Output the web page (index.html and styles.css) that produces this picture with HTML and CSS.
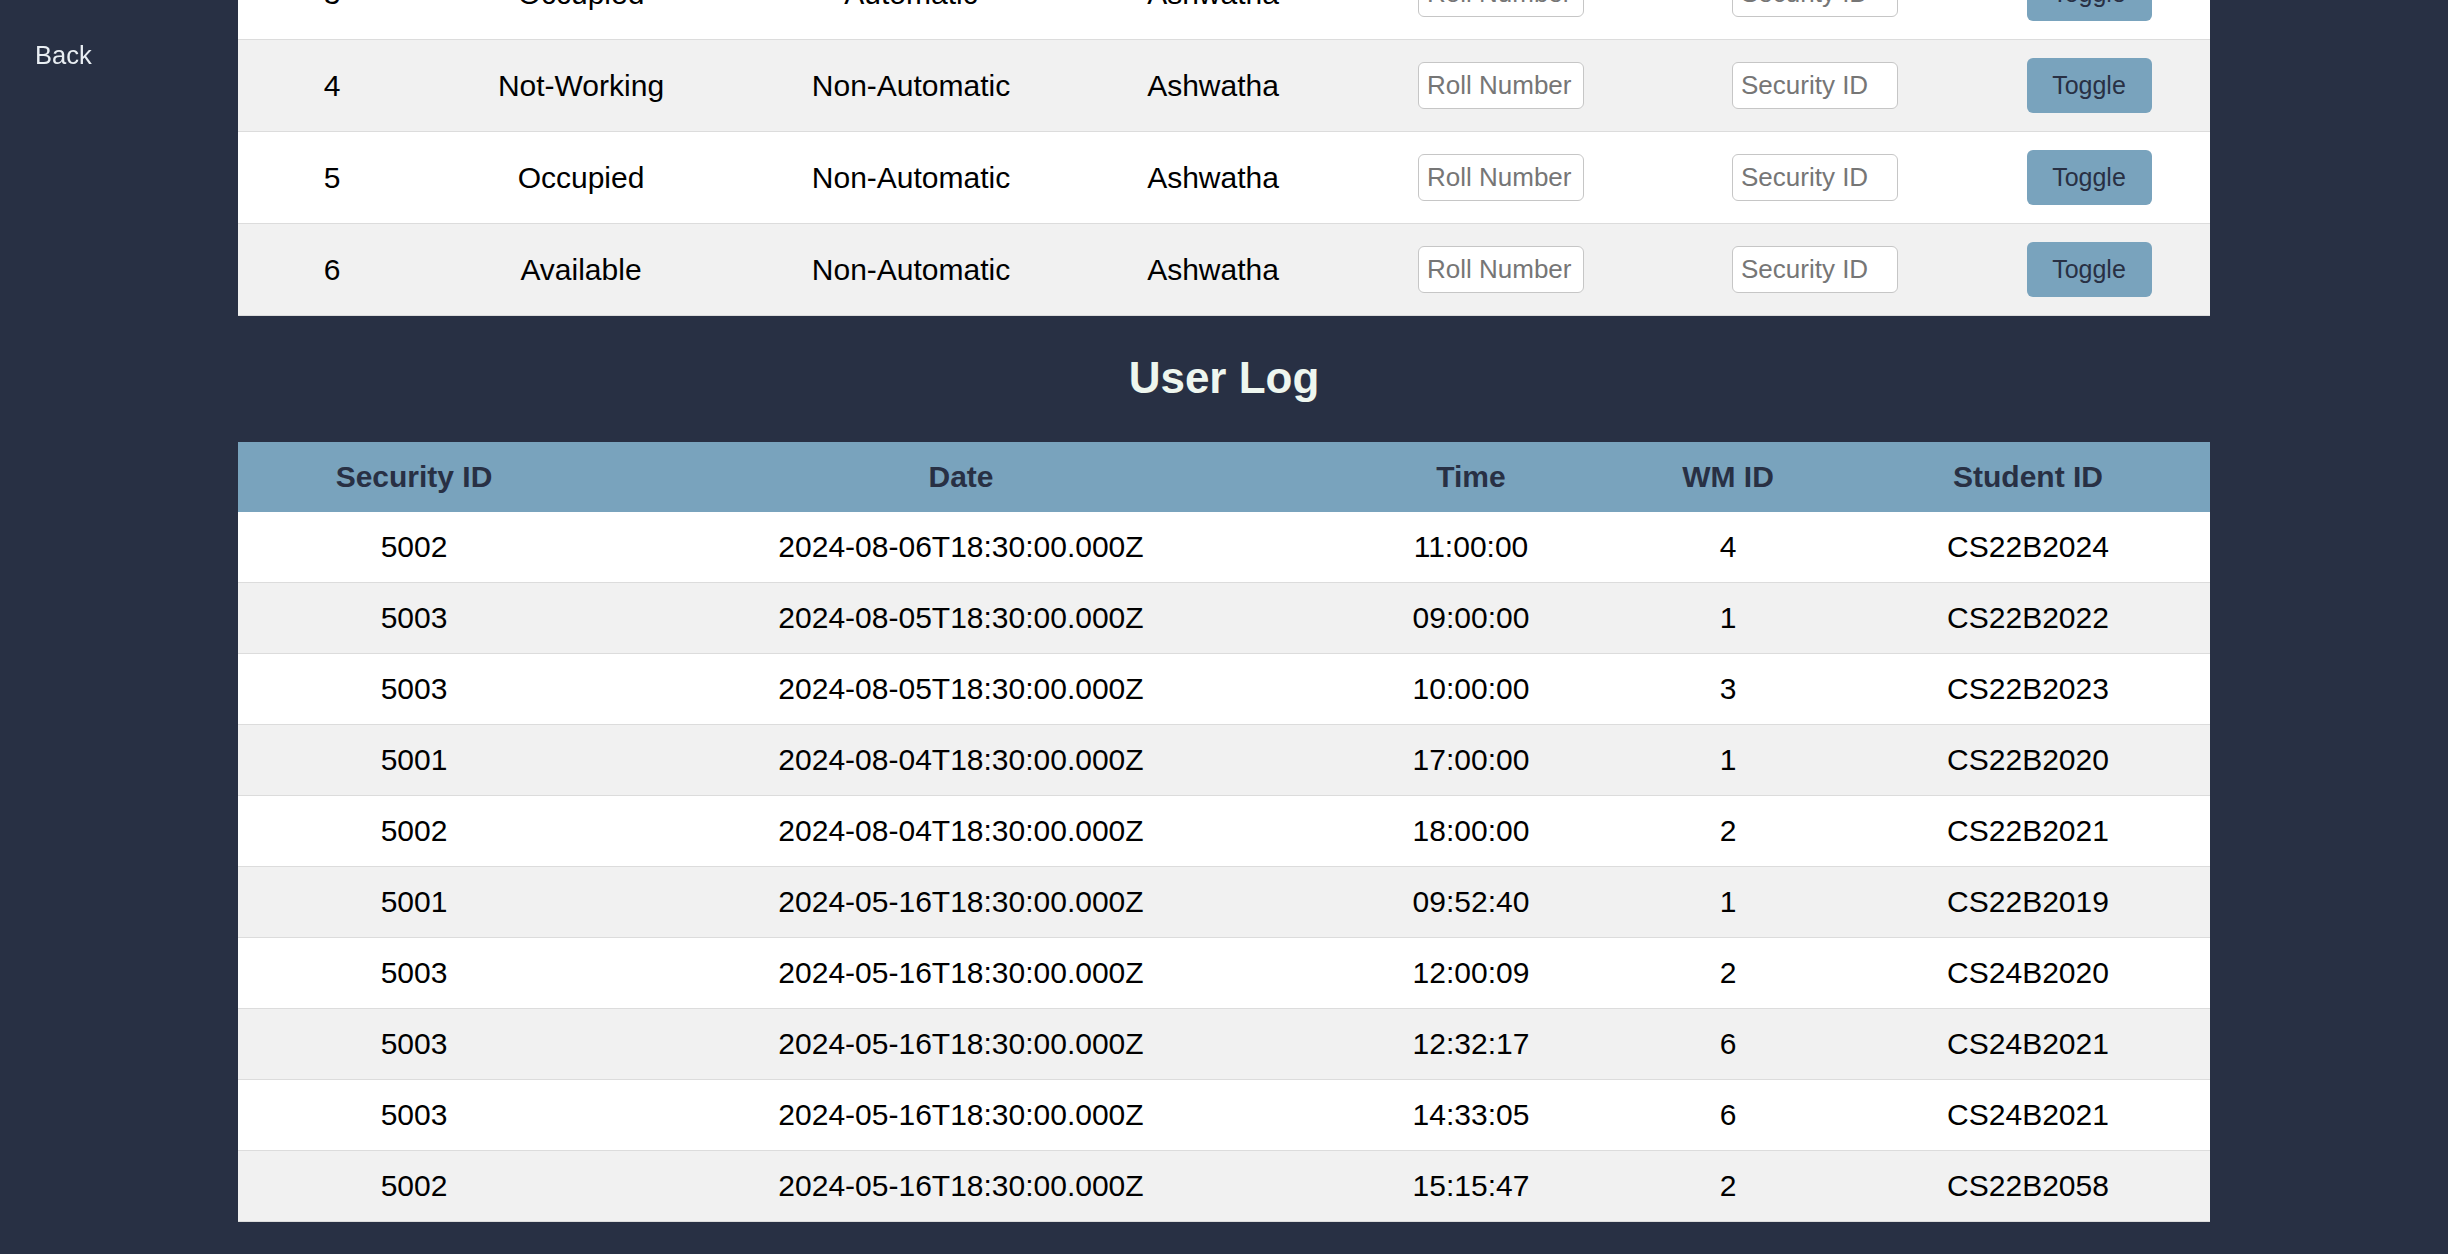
FILE: index.html
```html
<!DOCTYPE html>
<html lang="en">
<head>
<meta charset="utf-8">
<title>Washing Machines - User Log</title>
<link rel="stylesheet" href="styles.css">
</head>
<body>
<button class="back" type="button">Back</button>
<main class="page">
  <table class="machines">
    <colgroup>
      <col class="m-c1"><col class="m-c2"><col class="m-c3"><col class="m-c4"><col class="m-c5"><col class="m-c6"><col class="m-c7">
    </colgroup>
    <tbody>
      <tr>
        <td>3</td><td>Occupied</td><td>Automatic</td><td>Ashwatha</td>
        <td><input class="field" type="text" placeholder="Roll Number"></td>
        <td><input class="field" type="text" placeholder="Security ID"></td>
        <td><button class="toggle" type="button">Toggle</button></td>
      </tr>
      <tr>
        <td>4</td><td>Not-Working</td><td>Non-Automatic</td><td>Ashwatha</td>
        <td><input class="field" type="text" placeholder="Roll Number"></td>
        <td><input class="field" type="text" placeholder="Security ID"></td>
        <td><button class="toggle" type="button">Toggle</button></td>
      </tr>
      <tr>
        <td>5</td><td>Occupied</td><td>Non-Automatic</td><td>Ashwatha</td>
        <td><input class="field" type="text" placeholder="Roll Number"></td>
        <td><input class="field" type="text" placeholder="Security ID"></td>
        <td><button class="toggle" type="button">Toggle</button></td>
      </tr>
      <tr>
        <td>6</td><td>Available</td><td>Non-Automatic</td><td>Ashwatha</td>
        <td><input class="field" type="text" placeholder="Roll Number"></td>
        <td><input class="field" type="text" placeholder="Security ID"></td>
        <td><button class="toggle" type="button">Toggle</button></td>
      </tr>
    </tbody>
  </table>

  <h2 class="section-title">User Log</h2>

  <table class="log">
    <colgroup>
      <col class="l-c1"><col class="l-c2"><col class="l-c3"><col class="l-c4"><col class="l-c5">
    </colgroup>
    <thead>
      <tr><th>Security ID</th><th>Date</th><th>Time</th><th>WM ID</th><th>Student ID</th></tr>
    </thead>
    <tbody>
      <tr><td>5002</td><td>2024-08-06T18:30:00.000Z</td><td>11:00:00</td><td>4</td><td>CS22B2024</td></tr>
      <tr><td>5003</td><td>2024-08-05T18:30:00.000Z</td><td>09:00:00</td><td>1</td><td>CS22B2022</td></tr>
      <tr><td>5003</td><td>2024-08-05T18:30:00.000Z</td><td>10:00:00</td><td>3</td><td>CS22B2023</td></tr>
      <tr><td>5001</td><td>2024-08-04T18:30:00.000Z</td><td>17:00:00</td><td>1</td><td>CS22B2020</td></tr>
      <tr><td>5002</td><td>2024-08-04T18:30:00.000Z</td><td>18:00:00</td><td>2</td><td>CS22B2021</td></tr>
      <tr><td>5001</td><td>2024-05-16T18:30:00.000Z</td><td>09:52:40</td><td>1</td><td>CS22B2019</td></tr>
      <tr><td>5003</td><td>2024-05-16T18:30:00.000Z</td><td>12:00:09</td><td>2</td><td>CS24B2020</td></tr>
      <tr><td>5003</td><td>2024-05-16T18:30:00.000Z</td><td>12:32:17</td><td>6</td><td>CS24B2021</td></tr>
      <tr><td>5003</td><td>2024-05-16T18:30:00.000Z</td><td>14:33:05</td><td>6</td><td>CS24B2021</td></tr>
      <tr><td>5002</td><td>2024-05-16T18:30:00.000Z</td><td>15:15:47</td><td>2</td><td>CS22B2058</td></tr>
    </tbody>
  </table>
</main>
</body>
</html>
```
FILE: styles.css
```css
html, body {
  margin: 0;
  padding: 0;
}

body {
  background: #283044;
  font-family: "Liberation Sans", Arial, sans-serif;
  color: #000;
  overflow: hidden;
}

.back {
  position: fixed;
  top: 41px;
  left: 35px;
  margin: 0;
  padding: 0;
  border: none;
  background: transparent;
  color: #e9eef3;
  font-family: "Liberation Sans", Arial, sans-serif;
  font-size: 25.5px;
  line-height: normal;
  cursor: pointer;
}

.page {
  display: flex;
  flex-direction: column;
  align-items: center;
  margin-top: -52px;
}

table {
  width: 1972px;
  border-collapse: collapse;
  table-layout: fixed;
  font-size: 30px;
}

td, th {
  text-align: center;
  vertical-align: middle;
  padding: 18px 0;
  line-height: 34px;
}

tbody tr {
  background: #ffffff;
  border-bottom: 1px solid #dcdcdc;
}

tbody tr:nth-child(even) {
  background: #f1f1f1;
}

/* machines table column widths */
.m-c1 { width: 188px; }
.m-c2 { width: 310px; }
.m-c3 { width: 350px; }
.m-c4 { width: 254px; }
.m-c5 { width: 322px; }
.m-c6 { width: 306px; }
.m-c7 { width: 242px; }

.machines td {
  padding: 18px 0;
  height: 55px;
}

.field {
  box-sizing: border-box;
  width: 166px;
  height: 47px;
  margin: 0;
  padding: 0 8px;
  border: 1px solid #c6c6c6;
  border-radius: 6px;
  background: #fff;
  font-family: "Liberation Sans", Arial, sans-serif;
  font-size: 26px;
  color: #000;
  vertical-align: middle;
}

.field::placeholder {
  color: #767676;
}

.toggle {
  box-sizing: border-box;
  width: 125px;
  height: 55px;
  margin: 0;
  padding: 0;
  border: none;
  border-radius: 6px;
  background: #79a3bd;
  color: #283044;
  font-family: "Liberation Sans", Arial, sans-serif;
  font-size: 25px;
  line-height: 55px;
  vertical-align: middle;
  cursor: pointer;
}

.section-title {
  margin: 37px 0 39px;
  font-size: 44px;
  line-height: 50px;
  font-weight: bold;
  color: #eef6ef;
  text-align: center;
}

/* log table column widths */
.l-c1 { width: 352px; }
.l-c2 { width: 742px; }
.l-c3 { width: 278px; }
.l-c4 { width: 236px; }
.l-c5 { width: 364px; }

.log thead tr {
  background: #79a3bd;
}

.log th {
  color: #283044;
  font-weight: bold;
}
```
